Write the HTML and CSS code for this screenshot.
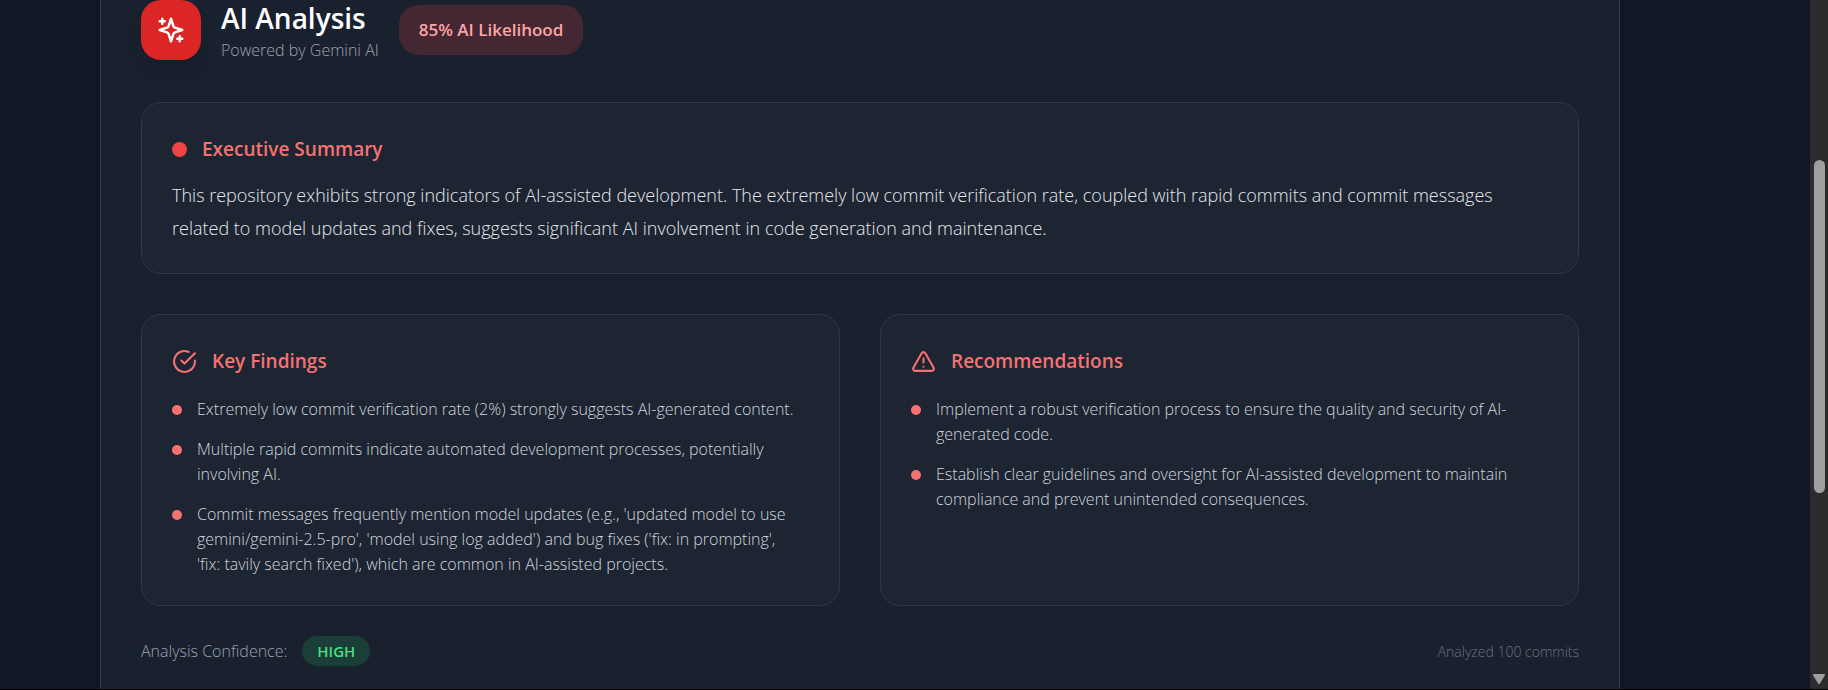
FILE: index.html
```html
<!DOCTYPE html>
<html lang="en">
<head>
<meta charset="utf-8">
<meta name="viewport" content="width=device-width, initial-scale=1">
<title>AI Analysis</title>
<link rel="stylesheet" href="styles.css">
</head>
<body>
<div class="page">
  <main class="content">
    <section class="analysis">
      <header class="header">
        <span class="logo">
          <svg viewBox="0 0 24 24" width="30" height="30" fill="none" stroke="currentColor" stroke-width="2" stroke-linecap="round" stroke-linejoin="round" aria-hidden="true">
            <path d="m12 3-1.912 5.813a2 2 0 0 1-1.275 1.275L3 12l5.813 1.912a2 2 0 0 1 1.275 1.275L12 21l1.912-5.813a2 2 0 0 1 1.275-1.275L21 12l-5.813-1.912a2 2 0 0 1-1.275-1.275L12 3Z"/>
            <path d="M5 3v4M19 17v4M3 5h4M17 19h4"/>
          </svg>
        </span>
        <div class="titles">
          <h1 class="title">AI Analysis</h1>
          <p class="subtitle">Powered by Gemini AI</p>
        </div>
        <span class="likelihood">85% AI Likelihood</span>
      </header>

      <article class="card summary">
        <h2 class="heading heading-summary"><span class="dot"></span>Executive Summary</h2>
        <p class="summary-text">This repository exhibits strong indicators of AI-assisted development. The extremely low commit verification rate, coupled with rapid commits and commit messages related to model updates and fixes, suggests significant AI involvement in code generation and maintenance.</p>
      </article>

      <div class="columns">
        <article class="card findings">
          <h2 class="heading">
            <svg viewBox="0 0 24 24" width="25" height="25" fill="none" stroke="currentColor" stroke-width="2" stroke-linecap="round" stroke-linejoin="round" aria-hidden="true">
              <path d="M22 11.08V12a10 10 0 1 1-5.93-9.14"/>
              <path d="m9 11 3 3L22 4"/>
            </svg>
            Key Findings
          </h2>
          <ul class="list">
            <li class="item">Extremely low commit verification rate (2%) strongly suggests AI-generated content.</li>
            <li class="item">Multiple rapid commits indicate automated development processes, potentially involving AI.</li>
            <li class="item">Commit messages frequently mention model updates (e.g., 'updated model to use gemini/gemini-2.5-pro', 'model using log added') and bug fixes ('fix: in prompting', 'fix:&nbsp;tavily search fixed'), which are common in AI-assisted projects.</li>
          </ul>
        </article>
        <article class="card findings">
          <h2 class="heading">
            <svg viewBox="0 0 24 24" width="25" height="25" fill="none" stroke="currentColor" stroke-width="2" stroke-linecap="round" stroke-linejoin="round" aria-hidden="true">
              <path d="m21.73 18-8-14a2 2 0 0 0-3.48 0l-8 14A2 2 0 0 0 4 21h16a2 2 0 0 0 1.73-3Z"/>
              <path d="M12 9v4M12 17h.01"/>
            </svg>
            Recommendations
          </h2>
          <ul class="list">
            <li class="item">Implement a robust verification process to ensure the quality and security of AI-generated code.</li>
            <li class="item">Establish clear guidelines and oversight for AI-assisted development to maintain compliance and prevent unintended consequences.</li>
          </ul>
        </article>
      </div>

      <footer class="footer">
        <span class="confidence">Analysis Confidence: <strong class="level">HIGH</strong></span>
        <span class="count">Analyzed 100 commits</span>
      </footer>
    </section>
  </main>
  <div class="scrollbar" aria-hidden="true">
    <span class="thumb"></span>
    <svg class="arrow" viewBox="0 0 14 11" width="14" height="11"><path d="M2 1h10L7 9Z" fill="#9f9f9f" stroke="#9f9f9f" stroke-width="2" stroke-linejoin="round"/></svg>
  </div>
</div>
</body>
</html>
```

FILE: styles.css
```css
*,
*::before {
  box-sizing: border-box;
}

body,
h1,
h2,
p,
ul {
  margin: 0;
  padding: 0;
}

body {
  background: #111827;
  color: #d1d5db;
  font-family: "Segoe UI", "Open Sans", "Noto Sans", sans-serif;
  font-weight: 300;
}

.page {
  display: flex;
  min-height: 100vh;
  border-bottom: 1px solid #000;
}

.content {
  display: flex;
  flex: 1;
  padding: 0 190px 0 100px;
  background: #111726;
}

.analysis {
  flex: 1;
  padding: 0 40px 22px;
  background: #19212f;
  border: solid #353d4b;
  border-width: 0 1px;
}

.header {
  display: flex;
  align-items: center;
  gap: 20px;
  height: 60px;
  margin-bottom: 42px;
}

.logo {
  display: grid;
  place-items: center;
  width: 60px;
  height: 60px;
  border-radius: 20px;
  background: #dc2626;
  color: #fff;
  box-shadow: 0 12px 18px -4px rgba(0, 0, 0, 0.12);
}

.title {
  color: #fff;
  font-size: 28px;
  font-weight: 600;
  line-height: 40px;
}

.subtitle {
  color: #9ca3af;
  font-size: 16px;
  line-height: 25px;
}

.likelihood {
  padding: 0 20px;
  border-radius: 20px;
  background: #452733;
  color: #fca5a5;
  font-size: 17px;
  font-weight: 600;
  line-height: 50px;
}

.card {
  padding: 30px;
  border: 1px solid #2f3846;
  border-radius: 20px;
  background: #1d2533;
}

.heading {
  display: flex;
  align-items: center;
  gap: 15px;
  margin-bottom: 20px;
  color: #f87171;
  font-size: 19px;
  font-weight: 600;
  line-height: 32px;
}

.dot {
  width: 15px;
  height: 15px;
  border-radius: 50%;
  background: #ef4444;
}

.summary {
  margin-bottom: 40px;
  padding-bottom: 28px;
}

.findings {
  padding-bottom: 28px;
}

.heading-summary {
  margin-bottom: 14px;
}

.summary-text {
  color: #e5e7eb;
  font-size: 18px;
  line-height: 33px;
}

.columns {
  display: grid;
  grid-template-columns: 1fr 1fr;
  gap: 40px;
  margin-bottom: 30px;
}

.list {
  display: grid;
  gap: 15px;
  list-style: none;
}

.item {
  display: flex;
  gap: 15px;
  font-size: 16px;
  line-height: 25px;
}

.item::before {
  content: "";
  flex: none;
  width: 10px;
  height: 10px;
  margin-top: 8px;
  border-radius: 50%;
  background: #f87171;
}

.footer,
.confidence {
  display: flex;
  align-items: center;
}

.footer {
  justify-content: space-between;
}

.confidence {
  gap: 15px;
  color: #9ca3af;
  font-size: 16px;
}

.level {
  padding: 0 15px;
  border-radius: 15px;
  background: #1b3f38;
  color: #4ade80;
  font-size: 15px;
  font-weight: 600;
  line-height: 30px;
}

.count {
  color: #6b7280;
  font-size: 14px;
}

.scrollbar {
  display: flex;
  flex-direction: column;
  align-items: center;
  justify-content: space-between;
  width: 18px;
  padding: 160px 0 4px;
  background: #2c2c2c;
}

.thumb {
  width: 11px;
  height: 333px;
  border-radius: 6px;
  background: #9f9f9f;
}
```
